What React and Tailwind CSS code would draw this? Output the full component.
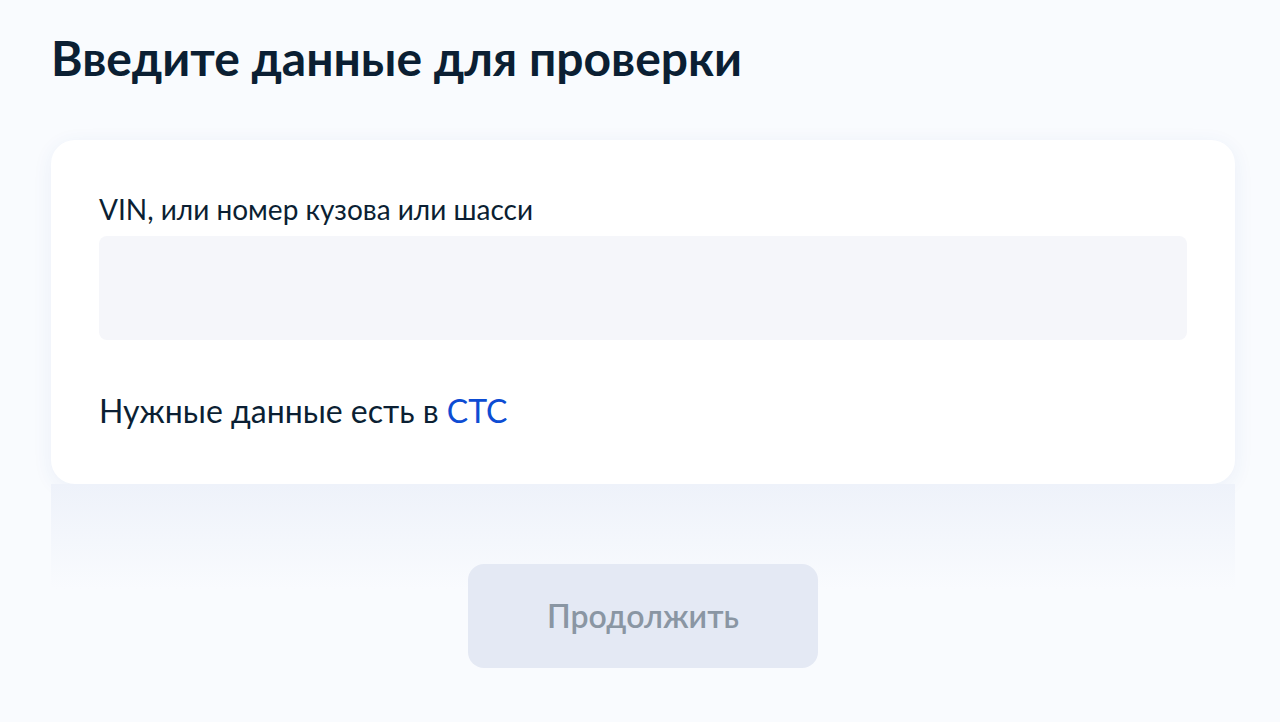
export default function App() {
  return (
    <div className="min-h-screen w-full bg-[#f9fbfe] font-['Lato','Noto_Sans',sans-serif] text-[#0b1f33]">
      <div className="pl-[51px] pr-[45px] pt-[30px]">
        <h1 className="text-[48px] font-bold leading-[56px]">Введите данные для проверки</h1>
        <div className="mt-[54px] rounded-[24px] bg-white px-[48px] pt-[52px] pb-[53px] shadow-[0_4px_20px_rgba(40,80,170,0.07)]">
          <label className="block text-[28px] leading-[34px]">VIN, или номер кузова или шасси</label>
          <div className="mt-[10px] h-[104px] rounded-[8px] bg-[#f5f6fa]" />
          <p className="mt-[51px] text-[32px] leading-[40px]">
            Нужные данные есть в <span className="text-[#0d4cd3]">СТС</span>
          </p>
        </div>
        <div className="flex justify-center bg-[linear-gradient(to_bottom,#eef2fa,#f9fbfe_105px)] pt-[80px] pb-[54px]">
          <button className="h-[104px] w-[350px] rounded-[16px] bg-[#e4e9f4] text-[32px] font-semibold text-[#8a96a3]">
            Продолжить
          </button>
        </div>
      </div>
    </div>
  );
}
